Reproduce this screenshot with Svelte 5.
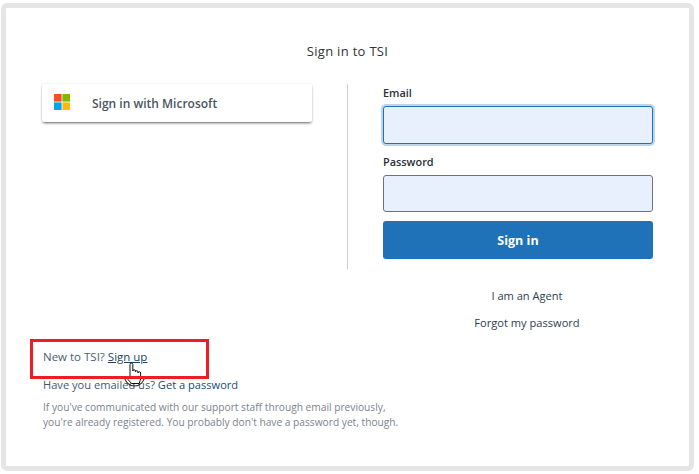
<script>
	const helpText = [
		"If you've communicated with our support staff through email previously,",
		"you're already registered. You probably don't have a password yet, though."
	];
</script>

<div class="page">
	<main class="card">
		<h1 class="title">Sign in to TSI</h1>

		<div class="columns">
			<div class="sso-col">
				<button class="ms-button" type="button">
					<svg class="ms-logo" width="16" height="16" viewBox="0 0 16 16" aria-hidden="true">
						<rect x="0" y="0" width="7.6" height="7.6" fill="#f25022" />
						<rect x="8.4" y="0" width="7.6" height="7.6" fill="#7fba00" />
						<rect x="0" y="8.4" width="7.6" height="7.6" fill="#00a4ef" />
						<rect x="8.4" y="8.4" width="7.6" height="7.6" fill="#ffb900" />
					</svg>
					<span>Sign in with Microsoft</span>
				</button>
			</div>

			<form class="form-col">
				<label class="field-label" for="email">Email</label>
				<input id="email" class="field focused" type="email" />
				<label class="field-label second" for="password">Password</label>
				<input id="password" class="field" type="password" />
				<button class="submit" type="button">Sign in</button>
			</form>
		</div>

		<div class="extra-links">
			<a href="#agent">I am an Agent</a>
			<a href="#forgot">Forgot my password</a>
		</div>

		<div class="footer">
			<p class="signup">New to TSI? <a class="underlined" href="#signup">Sign up</a></p>
			<p class="emailed">Have you emailed us? <a href="#password">Get a password</a></p>
			<p class="help">
				{#each helpText as line}
					<span>{line}</span>
				{/each}
			</p>

			<svg class="cursor" width="34" height="34" viewBox="0 0 34 34" aria-hidden="true">
				<path d="M4.5 16A10 10 0 0 0 24.5 16" fill="none" stroke="#222" stroke-width="1.1" />
				<path
					d="M10 17V4.5a1.4 1.4 0 0 1 2.8 0V11a1.3 1.3 0 0 1 2.6 0v1a1.3 1.3 0 0 1 2.6 0v1a1.3 1.3 0 0 1 2.6 0v6l-1.4 4.5H11.5L8 19.5c-1-1.3.6-3 2-1.7z"
					fill="#fff"
					stroke="#111"
					stroke-width="1"
				/>
			</svg>
			<div class="highlight"></div>
		</div>
	</main>
</div>

<style>
	:global(body) {
		margin: 0;
		background: #fff;
		font-family: 'Open Sans', 'Noto Sans', sans-serif;
	}

	.page {
		width: 699px;
		height: 474px;
		padding: 3px 5px 3px 1px;
		box-sizing: border-box;
	}

	.card {
		height: 468px;
		box-sizing: border-box;
		border: 5px solid #e5e5e5;
		border-radius: 6px;
		padding: 0 36px;
		display: flex;
		flex-direction: column;
		color: #3a4450;
	}

	.title {
		margin: 33px 0 0;
		height: 20px;
		font-size: 13px;
		line-height: 20px;
		font-weight: 400;
		text-align: center;
		letter-spacing: 0.3px;
		color: #333;
	}

	.columns {
		margin-top: 23px;
		display: flex;
		height: 185px;
	}

	.sso-col {
		width: 306px;
		box-sizing: border-box;
		border-right: 1px solid #cfcfcf;
	}

	.ms-button {
		width: 270px;
		height: 38px;
		padding: 0 0 0 12px;
		display: flex;
		align-items: center;
		gap: 22px;
		background: #fff;
		border: 0;
		border-radius: 2px;
		box-shadow: 0 2px 3px -1px rgba(0, 0, 0, 0.6), 0 0 2px rgba(0, 0, 0, 0.14);
		font: 600 12px 'Open Sans', sans-serif;
		color: #4a5563;
	}

	.ms-logo {
		flex: none;
		margin-top: -2px;
	}

	.form-col {
		width: 270px;
		margin-left: 35px;
		display: flex;
		flex-direction: column;
	}

	.field-label {
		height: 17px;
		font-size: 10.9px;
		line-height: 17px;
		font-weight: 600;
		color: #2a3036;
	}

	.field-label.second {
		margin-top: 9px;
		height: 22px;
	}

	.field {
		width: 270px;
		height: 37px;
		box-sizing: border-box;
		margin: 0;
		padding: 0 8px;
		background: #e8f0fe;
		border: 1px solid #6b7280;
		border-radius: 3px;
		outline: 0;
	}

	.field.focused {
		height: 38px;
		margin-top: 5px;
		border-color: #2072b8;
		box-shadow: 0 0 0 2px #bcd4ec;
	}

	.submit {
		height: 38px;
		margin-top: 9px;
		padding: 0;
		background: #2072b8;
		border: 0;
		border-radius: 3px;
		font: 700 12.5px 'Open Sans', sans-serif;
		color: #fff;
	}

	.extra-links {
		margin: 18px 0 0 350px;
		width: 270px;
		display: flex;
		flex-direction: column;
		align-items: center;
		gap: 9px;
		font-size: 11.1px;
		line-height: 18px;
	}

	.extra-links a {
		color: #2d3e50;
		text-decoration: none;
	}

	.footer {
		position: relative;
		margin-top: 16px;
		padding-left: 1px;
		font-size: 11.1px;
		color: #4a6072;
	}

	.footer p {
		margin: 0;
	}

	.signup {
		font-size: 11.5px;
		line-height: 18px;
	}

	.signup a {
		color: #1c3f5e;
	}

	.emailed {
		margin-top: 10px !important;
		line-height: 18px;
		color: #3a5a70;
	}

	.emailed a {
		color: #0f4f74;
		text-decoration: none;
	}

	.help {
		margin-top: 6px !important;
		font-size: 10.2px;
		line-height: 15px;
		color: #7a838c;
	}

	.help span {
		display: block;
		white-space: nowrap;
	}

	.highlight {
		position: absolute;
		left: -12px;
		top: -9px;
		width: 179px;
		height: 40px;
		box-sizing: border-box;
		border: 3.5px solid #ee1c25;
	}

	.cursor {
		position: absolute;
		left: 78px;
		top: 12px;
	}
</style>
